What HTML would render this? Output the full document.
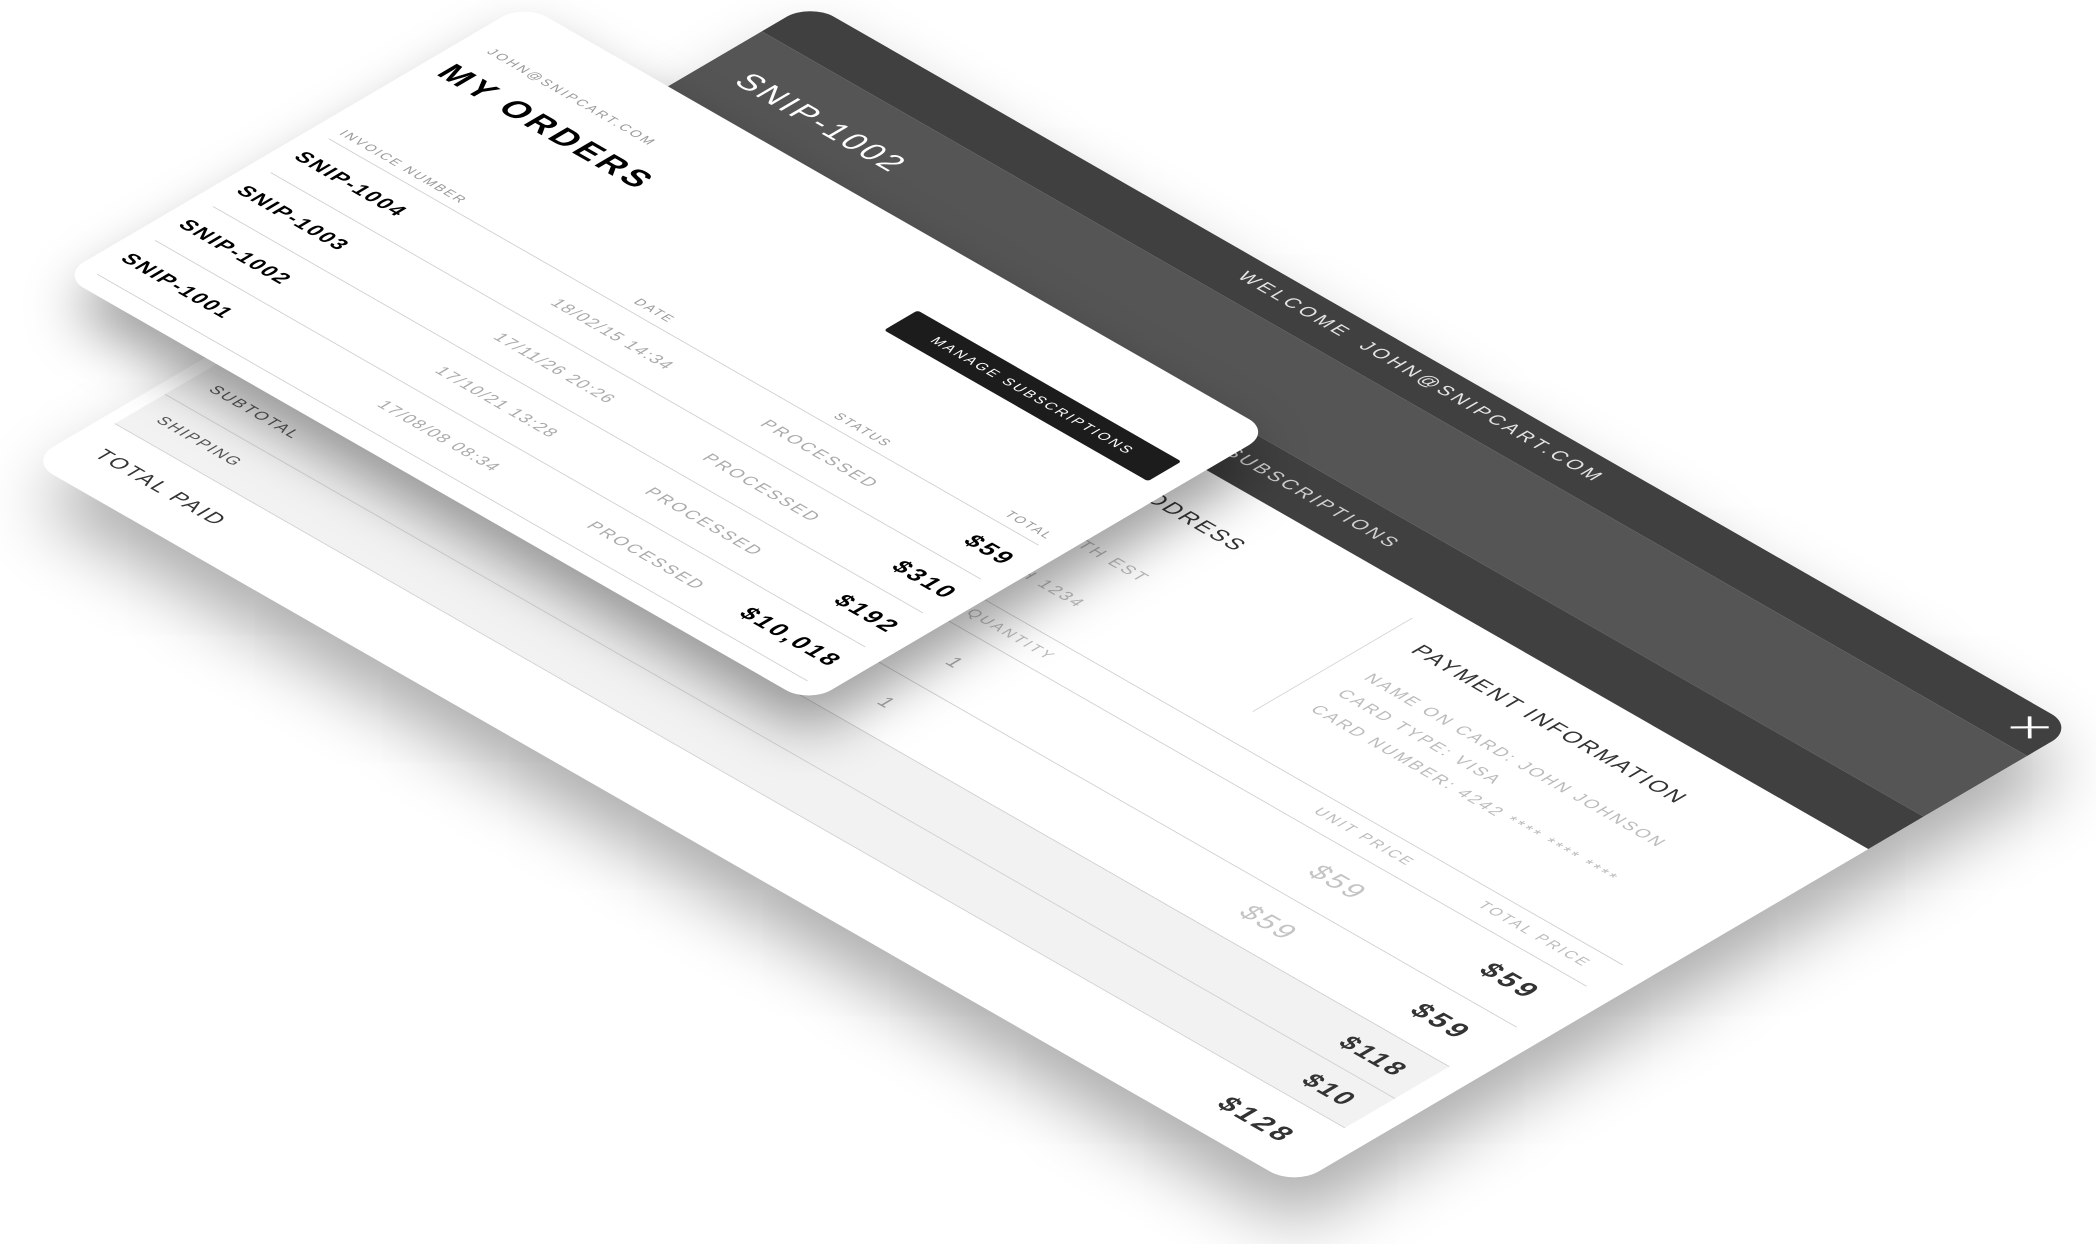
<!DOCTYPE html>
<html><head><meta charset="utf-8"><style>
html,body{margin:0;padding:0;background:#fff;}
body{width:2096px;height:1244px;overflow:hidden;position:relative;font-family:"Liberation Sans",Arial,sans-serif;}
.card{position:absolute;left:0;top:0;transform-origin:0 0;background:#fff;overflow:hidden;}
.back{width:1458px;height:905px;border-radius:28px;transform:matrix(0.868,0.497,-0.863,0.506,810,3);box-shadow:40px 40px 70px rgba(0,0,0,.33);}
.front{width:861px;height:536px;border-radius:26px;transform:matrix(0.868,0.497,-0.863,0.506,524,4);box-shadow:30px 30px 55px rgba(0,0,0,.38);}
.t{position:absolute;white-space:nowrap;line-height:1;}
.r{text-align:right;}
.c{text-align:center;width:300px;}
.ln{position:absolute;height:1px;background:#cfcfcf;}
.band{position:absolute;left:0;width:100%;}
</style></head><body>

<div class="card back">
  <div class="band" style="top:0;height:56px;background:#404040"></div>
  <div class="band" style="top:56px;height:120px;background:#555"></div>
  <div class="band" style="top:176px;height:64px;background:#404040"></div>
  <div class="t" style="left:34px;top:97px;font-size:32px;letter-spacing:3px;color:#fff">SNIP-1002</div>
  <div class="t" style="left:521px;top:15px;font-size:19px;letter-spacing:3.5px;color:#e4e4e4">WELCOME&nbsp; JOHN@SNIPCART.COM</div>
  <svg style="position:absolute;left:1416px;top:11px" width="30" height="30" viewBox="0 0 30 30"><path d="M4 4L26 26M26 4L4 26" stroke="#fff" stroke-width="3" fill="none"/></svg>
  <div class="t r" style="right:576px;top:198px;font-size:19px;letter-spacing:3px;color:#cfcfcf">ORDER DETAILS &nbsp;&nbsp; MANAGE SUBSCRIPTIONS</div>

  <div class="t r" style="right:663px;top:287px;font-size:22px;letter-spacing:2.5px;color:#333">BILLING ADDRESS</div>
  <div class="t r" style="right:688px;top:376px;font-size:17px;letter-spacing:2.5px;color:#bbb">1234 RUE NORTH EST</div>
  <div class="t r" style="right:763px;top:407px;font-size:17px;letter-spacing:2.5px;color:#bbb">MONTREAL, QC</div>
  <div class="t r" style="right:700px;top:438px;font-size:17px;letter-spacing:2.5px;color:#bbb">H1H 1234</div>

  <div style="position:absolute;left:962px;top:270px;width:1px;height:185px;background:#d4d4d4"></div>
  <div class="t" style="left:994px;top:287px;font-size:22px;letter-spacing:2.5px;color:#333">PAYMENT INFORMATION</div>
  <div class="t" style="left:994px;top:345px;font-size:17px;letter-spacing:2.5px;color:#bbb">NAME ON CARD: JOHN JOHNSON</div>
  <div class="t" style="left:994px;top:376px;font-size:17px;letter-spacing:2.5px;color:#bbb">CARD TYPE: VISA</div>
  <div class="t" style="left:994px;top:407px;font-size:17px;letter-spacing:2.5px;color:#bbb">CARD NUMBER: 4242 **** **** ****</div>

  <div style="position:absolute;left:13px;top:697px;width:1417px;height:121px;background:#f2f2f2"></div>
  <div class="ln" style="left:13px;width:1417px;top:496px"></div>
  <div class="ln" style="left:13px;width:1417px;top:538px"></div>
  <div class="ln" style="left:13px;width:1417px;top:619px"></div>
  <div class="ln" style="left:13px;width:1417px;top:697px"></div>
  <div class="ln" style="left:13px;width:1417px;top:760px"></div>
  <div class="ln" style="left:13px;width:1417px;top:818px"></div>

  <div class="t" style="left:34px;top:509px;font-size:15px;letter-spacing:2.5px;color:#bbb">PRODUCT</div>
  <div class="t r" style="right:665px;top:509px;font-size:15px;letter-spacing:2.5px;color:#bbb">QUANTITY</div>
  <div class="t r" style="right:251px;top:509px;font-size:15px;letter-spacing:2.5px;color:#bbb">UNIT PRICE</div>
  <div class="t r" style="right:48px;top:509px;font-size:15px;letter-spacing:2.5px;color:#bbb">TOTAL PRICE</div>

  <div class="t r" style="right:713px;top:567px;font-size:20px;color:#aaa">1</div>
  <div class="t r" style="right:248px;top:563px;font-size:28px;letter-spacing:3px;color:#c4c4c4">$59</div>
  <div class="t r" style="right:48px;top:563px;font-size:28px;letter-spacing:4px;color:#333;font-weight:bold">$59</div>
  <div class="t r" style="right:713px;top:646px;font-size:20px;color:#aaa">1</div>
  <div class="t r" style="right:248px;top:643px;font-size:28px;letter-spacing:3px;color:#c4c4c4">$59</div>
  <div class="t r" style="right:48px;top:643px;font-size:28px;letter-spacing:4px;color:#333;font-weight:bold">$59</div>

  <div class="t" style="left:34px;top:720px;font-size:16px;letter-spacing:2px;color:#555">SUBTOTAL</div>
  <div class="t r" style="right:48px;top:717px;font-size:26px;letter-spacing:3px;color:#333;font-weight:bold">$118</div>
  <div class="t" style="left:34px;top:781px;font-size:16px;letter-spacing:2px;color:#555">SHIPPING</div>
  <div class="t r" style="right:48px;top:776px;font-size:26px;letter-spacing:3px;color:#333;font-weight:bold">$10</div>
  <div class="t" style="left:32px;top:846px;font-size:21px;letter-spacing:2.5px;color:#333">TOTAL PAID</div>
  <div class="t r" style="right:48px;top:847px;font-size:28px;letter-spacing:4px;color:#333;font-weight:bold">$128</div>
</div>

<div class="card front">
  <div class="t" style="left:26px;top:59px;font-size:13px;letter-spacing:2.5px;color:#999">JOHN@SNIPCART.COM</div>
  <div class="t" style="left:18px;top:93px;font-size:33px;letter-spacing:4px;color:#000;font-weight:bold">MY ORDERS</div>

  <div style="position:absolute;left:534px;top:81px;width:304px;height:39px;background:#1c1c1c;border-radius:3px;color:#fff;font-size:14px;letter-spacing:2.5px;line-height:39px;text-align:center;white-space:nowrap">MANAGE SUBSCRIPTIONS</div>

  <div class="t" style="left:21px;top:225px;font-size:13px;letter-spacing:2px;color:#999">INVOICE NUMBER</div>
  <div class="t c" style="left:231px;top:225px;font-size:13px;letter-spacing:2px;color:#999">DATE</div>
  <div class="t c" style="left:471px;top:225px;font-size:13px;letter-spacing:2px;color:#999">STATUS</div>
  <div class="t r" style="right:23px;top:225px;font-size:13px;letter-spacing:2px;color:#999">TOTAL</div>

  <div class="ln" style="left:20px;width:818px;top:246px"></div>
  <div class="ln" style="left:20px;width:818px;top:313px"></div>
  <div class="ln" style="left:20px;width:818px;top:380px"></div>
  <div class="ln" style="left:20px;width:818px;top:447px"></div>
  <div class="ln" style="left:20px;width:818px;top:514px"></div>

  <div class="t" style="left:18px;top:269px;font-size:21px;letter-spacing:2px;font-weight:bold">SNIP-1004</div>
  <div class="t c" style="left:230px;top:271px;font-size:17px;letter-spacing:1.5px;color:#aaa">18/02/15 14:34</div>
  <div class="t c" style="left:470px;top:272px;font-size:17px;letter-spacing:2.5px;color:#aaa">PROCESSED</div>
  <div class="t r" style="right:22px;top:268px;font-size:24px;letter-spacing:3px;font-weight:bold">$59</div>

  <div class="t" style="left:18px;top:336px;font-size:21px;letter-spacing:2px;font-weight:bold">SNIP-1003</div>
  <div class="t c" style="left:230px;top:338px;font-size:17px;letter-spacing:1.5px;color:#aaa">17/11/26 20:26</div>
  <div class="t c" style="left:470px;top:339px;font-size:17px;letter-spacing:2.5px;color:#aaa">PROCESSED</div>
  <div class="t r" style="right:22px;top:335px;font-size:24px;letter-spacing:3px;font-weight:bold">$310</div>

  <div class="t" style="left:18px;top:403px;font-size:21px;letter-spacing:2px;font-weight:bold">SNIP-1002</div>
  <div class="t c" style="left:230px;top:405px;font-size:17px;letter-spacing:1.5px;color:#aaa">17/10/21 13:28</div>
  <div class="t c" style="left:470px;top:406px;font-size:17px;letter-spacing:2.5px;color:#aaa">PROCESSED</div>
  <div class="t r" style="right:22px;top:402px;font-size:24px;letter-spacing:3px;font-weight:bold">$192</div>

  <div class="t" style="left:18px;top:470px;font-size:21px;letter-spacing:2px;font-weight:bold">SNIP-1001</div>
  <div class="t c" style="left:230px;top:472px;font-size:17px;letter-spacing:1.5px;color:#aaa">17/08/08 08:34</div>
  <div class="t c" style="left:470px;top:473px;font-size:17px;letter-spacing:2.5px;color:#aaa">PROCESSED</div>
  <div class="t r" style="right:22px;top:469px;font-size:24px;letter-spacing:3px;font-weight:bold">$10,018</div>
</div>

</body></html>
